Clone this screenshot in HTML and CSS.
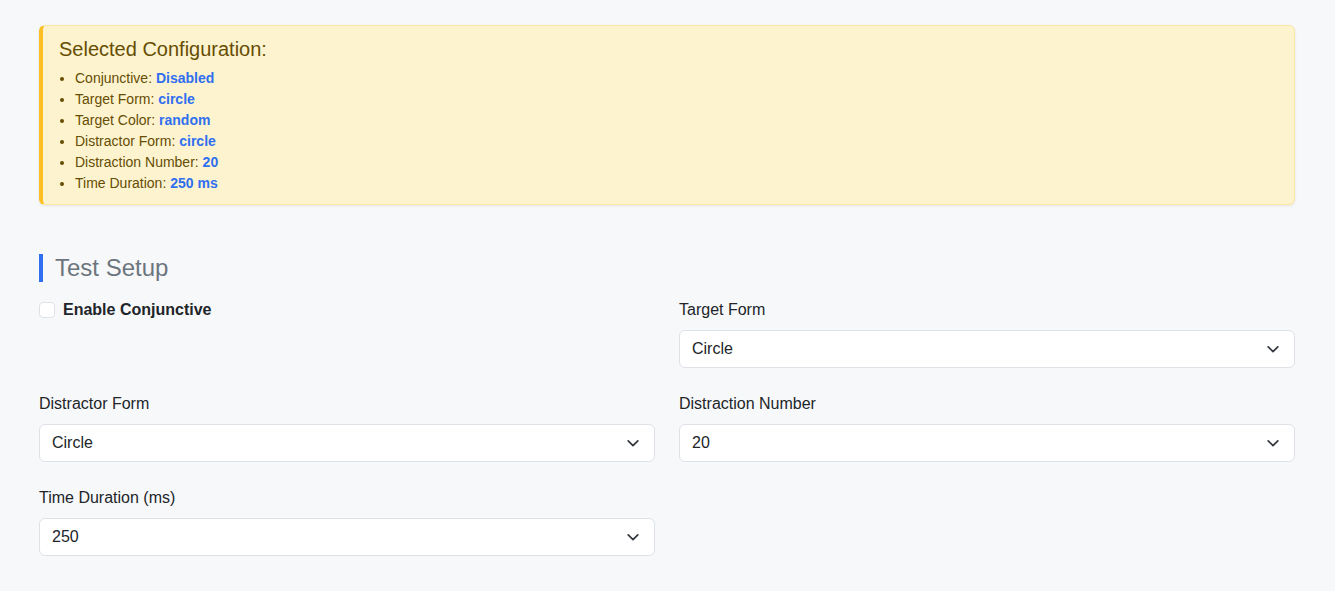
FILE: index.html
```html
<!DOCTYPE html>
<html lang="en">
<head>
<meta charset="utf-8">
<title>Test Setup</title>
<link rel="stylesheet" href="styles.css">
</head>
<body>
<div class="page">
  <div class="alert">
    <h4 class="alert-title">Selected Configuration:</h4>
    <ul class="config-list">
      <li>Conjunctive: <strong>Disabled</strong></li>
      <li>Target Form: <strong>circle</strong></li>
      <li>Target Color: <strong>random</strong></li>
      <li>Distractor Form: <strong>circle</strong></li>
      <li>Distraction Number: <strong>20</strong></li>
      <li>Time Duration: <strong>250 ms</strong></li>
    </ul>
  </div>

  <h3 class="section-title">Test Setup</h3>

  <div class="form-grid">
    <div class="field">
      <label class="check">
        <span class="check-box"></span>
        <span class="check-label">Enable Conjunctive</span>
      </label>
    </div>
    <div class="field">
      <div class="field-label">Target Form</div>
      <div class="select"><span>Circle</span><svg class="chev" viewBox="0 0 16 16" width="16" height="16"><path d="M2.5 5.5 8 11l5.5-5.5" fill="none" stroke="#343a40" stroke-width="2" stroke-linecap="round" stroke-linejoin="round"/></svg></div>
    </div>
    <div class="field">
      <div class="field-label">Distractor Form</div>
      <div class="select"><span>Circle</span><svg class="chev" viewBox="0 0 16 16" width="16" height="16"><path d="M2.5 5.5 8 11l5.5-5.5" fill="none" stroke="#343a40" stroke-width="2" stroke-linecap="round" stroke-linejoin="round"/></svg></div>
    </div>
    <div class="field">
      <div class="field-label">Distraction Number</div>
      <div class="select"><span>20</span><svg class="chev" viewBox="0 0 16 16" width="16" height="16"><path d="M2.5 5.5 8 11l5.5-5.5" fill="none" stroke="#343a40" stroke-width="2" stroke-linecap="round" stroke-linejoin="round"/></svg></div>
    </div>
    <div class="field">
      <div class="field-label">Time Duration (ms)</div>
      <div class="select"><span>250</span><svg class="chev" viewBox="0 0 16 16" width="16" height="16"><path d="M2.5 5.5 8 11l5.5-5.5" fill="none" stroke="#343a40" stroke-width="2" stroke-linecap="round" stroke-linejoin="round"/></svg></div>
    </div>
  </div>
</div>
</body>
</html>
```

FILE: styles.css
```css
* { box-sizing: border-box; }
html, body { margin: 0; padding: 0; }
body {
  background: #f7f8fa;
  font-family: "Liberation Sans", Arial, sans-serif;
  color: #212529;
  font-size: 16px;
}
.page {
  padding: 25px 40px 0 39px;
}
.alert {
  background: #fdf3cf;
  border: 1px solid #fde6a0;
  border-left: 4px solid #fbbf24;
  border-radius: 6px;
  padding: 11px 16px 10px 16px;
  color: #664d03;
  box-shadow: 0 1px 3px rgba(0,0,0,0.08);
}
.alert-title {
  margin: 0 0 7px 0;
  font-size: 20px;
  font-weight: 400;
  line-height: 24px;
}
.config-list {
  margin: 0;
  padding-left: 16px;
  font-size: 14px;
  line-height: 21px;
}
.config-list strong {
  color: #2f6ff0;
  font-weight: 700;
}
.section-title {
  margin: 49px 0 16px 0;
  border-left: 4px solid #2f6ff0;
  padding-left: 12px;
  font-size: 24px;
  font-weight: 400;
  line-height: 28px;
  color: #6c757d;
}
.form-grid {
  display: grid;
  grid-template-columns: 1fr 1fr;
  column-gap: 24px;
  row-gap: 24px;
}
.field-label {
  font-size: 16px;
  line-height: 24px;
  margin-bottom: 8px;
}
.check {
  display: flex;
  align-items: center;
  gap: 8px;
  line-height: 24px;
}
.check-box {
  width: 16px;
  height: 16px;
  border: 1px solid #dee2e6;
  border-radius: 4px;
  background: #fff;
}
.check-label {
  font-weight: 700;
}
.select {
  display: flex;
  align-items: center;
  justify-content: space-between;
  height: 38px;
  background: #fff;
  border: 1px solid #dee2e6;
  border-radius: 6px;
  padding: 0 14px 0 12px;
  font-size: 16px;
}
.chev {
  width: 14px;
  height: 14px;
}
```
